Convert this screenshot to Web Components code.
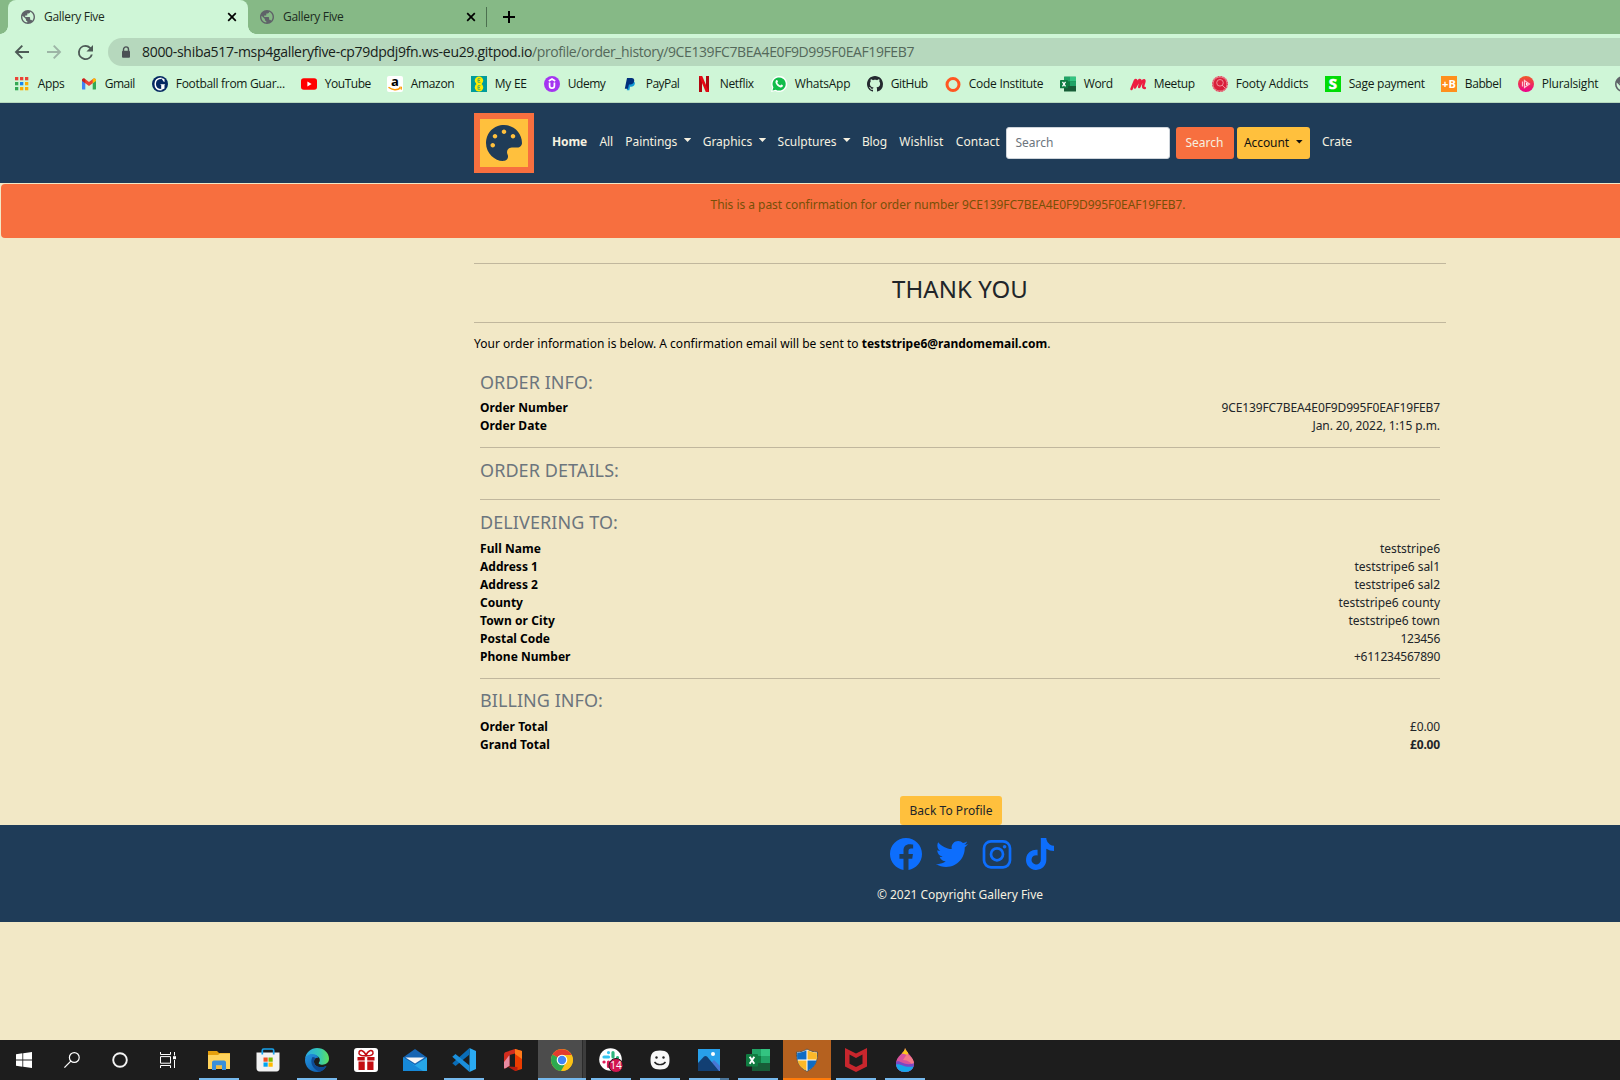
<!DOCTYPE html>
<html lang="en">
<head>
<meta charset="utf-8">
<title>Gallery Five</title>
<style>
html,body{margin:0;padding:0;height:1080px;overflow:hidden;background:#f2e8c6;font:12px/18px "Noto Sans",sans-serif;color:#212529}
</style>
</head>
<body>
<app-desktop></app-desktop>
<script>
const svg=(vb,body)=>`<svg viewBox="${vb}" xmlns="http://www.w3.org/2000/svg">${body}</svg>`;
const T=(x,y,s,f,t,extra='')=>`<text x="${x}" y="${y}" font-size="${s}" fill="${f}" text-anchor="middle" font-family="Open Sans,sans-serif" font-weight="700" ${extra}>${t}</text>`;
const ICONS={
globe:svg('2 2 20 20','<path fill="#5f6368" d="M12 2C6.48 2 2 6.48 2 12s4.48 10 10 10 10-4.48 10-10S17.52 2 12 2zm-1 17.93c-3.95-.49-7-3.85-7-7.93 0-.62.08-1.21.21-1.79L9 15v1c0 1.1.9 2 2 2v1.93zm6.9-2.54c-.26-.81-1-1.39-1.9-1.39h-1v-3c0-.55-.45-1-1-1H8v-2h2c.55 0 1-.45 1-1V7h2c1.1 0 2-.9 2-2v-.41c2.93 1.19 5 4.06 5 7.41 0 2.08-.8 3.97-2.1 5.39z"/>'),
close:svg('0 0 10 10','<path d="M1.2 1.2l7.6 7.6M8.8 1.2L1.2 8.8" stroke="#000" stroke-width="1.7"/>'),
plus:svg('0 0 12 12','<path d="M6 0v12M0 6h12" stroke="#000" stroke-width="2"/>'),
back:svg('0 0 16 16','<path d="M15 8H2.5M8.3 1.7L2 8l6.3 6.3" fill="none" stroke="#4d5a56" stroke-width="1.9"/>'),
fwd:svg('0 0 16 16','<path d="M1 8h12.5M7.7 1.7L14 8l-6.3 6.3" fill="none" stroke="#9db5a6" stroke-width="1.9"/>'),
reload:svg('4 4 16 16','<path fill="#4d5a56" d="M17.65 6.35A7.96 7.96 0 0 0 12 4a8 8 0 1 0 7.73 10h-2.08A6 6 0 1 1 12 6c1.66 0 3.14.69 4.22 1.78L13 11h7V4z"/>'),
lock:svg('0 0 10 13','<path d="M2.5 5V3.4a2.5 2.5 0 0 1 5 0V5" fill="none" stroke="#4b5054" stroke-width="1.4"/><rect x="1" y="4.8" width="8" height="7" rx="1" fill="#4b5054"/>'),
apps:svg('0 0 16 16',[['#ea4335','#ea4335','#ea4335'],['#34a853','#1a86f0','#fbab05'],['#34a853','#fbab05','#fbab05']].map((r,j)=>r.map((c,i)=>`<rect x="${1+i*5}" y="${1+j*5}" width="3.3" height="3.3" fill="${c}"/>`).join('')).join('')),
gmail:svg('0 0 16 16','<path fill="#4285f4" d="M1 4.5v8.2c0 .5.4.9.9.9h2.4V7z"/><path fill="#34a853" d="M15 4.5v8.2c0 .5-.4.9-.9.9h-2.4V7z"/><path fill="#ea4335" d="M1 4.1C1 2.6 2.7 2 3.800 2.800L8 6l4.200-3.200C13.300 2 15 2.600 15 4.100L11.700 7.200 8 10 4.300 7.200z"/><path fill="#c5221f" d="M1 4.100C1 2.600 2.700 2 3.800 2.800l.5.400v4L1 4.900z"/><path fill="#fbbc04" d="M15 4.100c0-1.500-1.700-2.100-2.800-1.300l-.5.400v4L15 4.900z"/>'),
guardian:svg('0 0 16 16','<circle cx="8" cy="8" r="8" fill="#052962"/><path d="M9.500 2.200C5.500 2.200 3.200 4.500 3.200 8s2.300 5.800 6.300 5.800" fill="none" stroke="#fff" stroke-width="1.500"/><path d="M9 2c1.600.1 2.700.7 3.500 1.300V6H12zM8 8.300h5.300l-.8.700v3.600c-1 .7-2 1.100-3.300 1.300V9z" fill="#fff"/>'),
youtube:svg('0 0 16 16','<rect y="2.200" width="16" height="11.600" rx="2.800" fill="#f00"/><path d="M6.400 5.600v4.800L10.600 8z" fill="#fff"/>'),
amazon:svg('0 0 16 16','<rect width="16" height="16" rx="2" fill="#fff"/>'+T(8,10,13,'#000','a')+'<path d="M1.500 11.300c3.500 3 9 3.200 12 .6" fill="none" stroke="#f90" stroke-width="1.500"/><path d="M12 11.300l2.600-.3-.4 2.800" fill="none" stroke="#f90"/>'),
ee:svg('0 0 16 16','<rect width="16" height="16" fill="#009c9c"/><circle cx="8" cy="4.600" r="4.200" fill="#ffec00"/><circle cx="8" cy="11.400" r="4.200" fill="#ffec00"/><path d="M9.500 2.700H7v3.600h2.500M7 4.500h2M9.500 9.700H7v3.600h2.500M7 11.500h2" stroke="#58b060" fill="none"/>'),
udemy:svg('0 0 16 16','<circle cx="8" cy="8" r="8" fill="#a435f0"/><path d="M5.600 6.500v3.300a2.400 2.400 0 0 0 4.800 0V6.500M4.800 5L8 3l3.200 2" fill="none" stroke="#fff" stroke-width="1.700"/>'),
paypal:svg('0 0 16 16','<path d="M6 5.500h5.500c2.500.5 1.500 5.300-2.300 5.300H8l-.6 3.400H4.800z" fill="#139ad6"/><path d="M5 2h4.800c2.800.2 3 3 1.600 4.900-1 1.300-2.500 1.600-4.500 1.600L6 12.800H2.800z" fill="#012f7c"/>'),
netflix:svg('0 0 16 16','<path d="M3 0h3v16H3zM10 0h3v16h-3z" fill="#b1060f"/><path d="M3 0h3.200L13 16h-3.200z" fill="#e50914"/>'),
whatsapp:svg('0 0 16 16','<path d="M0 16l1.200-4.300A8 8 0 1 1 4.300 14.900z" fill="#fff"/><path d="M1.500 14.500l.9-3.200A6.600 6.600 0 1 1 4.800 13.700z" fill="#12bd4b"/><path d="M5.200 4.300c1-.8 1.400.1 1.800 1.500l-.7 1c.7 1.300 1.600 2.100 2.900 2.700l1-1.100c1 .4 2 .7 1.700 1.600-.4 1.200-1.700 1.700-3 1.200C6.600 10.400 5.300 8.800 4.600 7c-.3-1 0-2 .6-2.700z" fill="#fff"/>'),
github:svg('0 0 16 16','<path fill="#24292f" d="M8 0C3.580 0 0 3.580 0 8c0 3.540 2.290 6.530 5.470 7.590.4.070.55-.17.55-.38 0-.19-.01-.82-.01-1.490-2.010.37-2.530-.49-2.690-.94-.09-.23-.48-.94-.82-1.130-.28-.15-.68-.52-.01-.53.63-.01 1.080.58 1.230.82.72 1.210 1.870.87 2.330.66.07-.52.28-.87.51-1.070-1.780-.2-3.640-.89-3.640-3.950 0-.87.31-1.590.82-2.150-.08-.2-.36-1.020.08-2.120 0 0 .67-.21 2.200.82.64-.18 1.320-.27 2-.27s1.360.09 2 .27c1.530-1.040 2.200-.82 2.200-.82.44 1.100.16 1.920.08 2.120.51.56.82 1.270.82 2.150 0 3.070-1.870 3.750-3.650 3.950.29.25.54.73.54 1.480 0 1.070-.01 1.930-.01 2.200 0 .21.15.46.55.38A8.010 8.010 0 0 0 16 8c0-4.420-3.580-8-8-8z"/>'),
ci:svg('0 0 16 16','<circle cx="8" cy="8.500" r="6" fill="none" stroke="#ff5722" stroke-width="3"/>'),
excel:svg('0 0 24 24','<rect x="6" y="1" width="18" height="22" rx="1" fill="#107c41"/><path d="M6 1h9v7H6z" fill="#21a366"/><path d="M15 1h9v7h-9z" fill="#33c481"/><path d="M15 8h9v7h-9z" fill="#21a366"/><path d="M6 15h18v8H6z" fill="#185c37"/><rect x="0" y="6" width="12" height="12.500" rx="1" fill="#107c41"/><path d="M3.700 8.700l4.600 7M8.300 8.700l-4.600 7" stroke="#fff" stroke-width="1.900"/>'),
meetup:svg('0 0 16 16','<path d="M1.500 13L5 4.500c1-1.200 2 .2 1.400 2L5 11.500 9 4.500c1-1.300 2-.3 1.300 1.500L9.200 11c1.500-3 2-5 4-6.500 1.500-.8 1.500.8.8 2.500-1 2.500-1.500 5 .8 5" fill="none" stroke="#ed1c40" stroke-width="2.500" stroke-linecap="round" stroke-linejoin="round"/>'),
footy:svg('0 0 16 16','<circle cx="8" cy="8" r="8" fill="#e8808c"/><circle cx="8" cy="8" r="6.600" fill="#d91f3a"/><circle cx="8" cy="6.800" r="3.300" fill="none" stroke="#ee909b"/><circle cx="8" cy="8" r="7.500" fill="none" stroke="#d9314a" stroke-dasharray="1 2"/><path d="M10 9l3 3" stroke="#ee909b"/>'),
sage:svg('0 0 16 16','<rect width="16" height="16" fill="#00dc06"/>'+T(8,13.300,15,'#fff','S','stroke="#fff" stroke-width=".6"')),
babbel:svg('0 0 16 16','<rect width="16" height="16" fill="#ff8f1c"/>'+T(8,12.200,11,'#fff','+B','textLength="14"')),
plural:svg('0 0 16 16','<defs><linearGradient id="g" x2="0" y2="1"><stop stop-color="#f05a28"/><stop offset="1" stop-color="#ec008c"/></linearGradient></defs><circle cx="8" cy="8" r="8" fill="url(#g)"/><path d="M6.500 4.500v7l5-3.500zM4.500 5.500v5" fill="none" stroke="#ffc3d3" stroke-width="1.200"/><path d="M8 6.500v3L10.200 8z" fill="#fff"/>'),
palette:svg('0 0 512 512','<path fill="#1f3c58" d="M204.300 5C104.900 24.400 24.800 104.300 5.200 203.400c-37 187 131.700 326.400 258.800 306.700 41.200-6.400 61.400-54.600 42.500-91.700-23.100-45.400 9.900-98.400 60.900-98.400h79.700c35.800 0 64.800-29.600 64.900-65.300C511.500 97.100 368.100-26.900 204.300 5zM96 320c-17.700 0-32-14.300-32-32s14.300-32 32-32 32 14.300 32 32-14.300 32-32 32zm32-128c-17.700 0-32-14.300-32-32s14.300-32 32-32 32 14.300 32 32-14.300 32-32 32zm128-64c-17.700 0-32-14.300-32-32s14.300-32 32-32 32 14.300 32 32-14.300 32-32 32zm128 64c-17.700 0-32-14.300-32-32s14.300-32 32-32 32 14.300 32 32-14.300 32-32 32z"/>'),
facebook:svg('0 0 16 16','<path fill="#0d6efd" d="M16 8.049c0-4.446-3.582-8.050-8-8.050C3.580 0-.002 3.603-.002 8.050c0 4.017 2.926 7.347 6.750 7.951v-5.625h-2.030V8.050H6.750V6.275c0-2.017 1.195-3.131 3.022-3.131.876 0 1.791.157 1.791.157v1.980h-1.009c-.993 0-1.303.621-1.303 1.258v1.510h2.218l-.354 2.326H9.250V16c3.824-.604 6.750-3.934 6.750-7.951z"/>'),
twitter:svg('0 0 512 512','<path fill="#0d6efd" d="M459.370 151.716c.325 4.548.325 9.097.325 13.645 0 138.720-105.583 298.558-298.558 298.558-59.452 0-114.680-17.219-161.137-47.106 8.447.974 16.568 1.299 25.340 1.299 49.055 0 94.213-16.568 130.274-44.832-46.132-.975-84.792-31.188-98.112-72.772 6.498.974 12.995 1.624 19.818 1.624 9.421 0 18.843-1.300 27.614-3.573-48.081-9.747-84.143-51.980-84.143-102.985v-1.299c13.969 7.797 30.214 12.670 47.431 13.319-28.264-18.843-46.781-51.005-46.781-87.391 0-19.492 5.197-37.360 14.294-52.954 51.655 63.675 129.300 105.258 216.365 109.807-1.624-7.797-2.599-15.918-2.599-24.040 0-57.828 46.782-104.934 104.934-104.934 30.213 0 57.502 12.670 76.670 33.137 23.715-4.548 46.456-13.320 66.599-25.340-7.798 24.366-24.366 44.833-46.132 57.827 21.117-2.273 41.584-8.122 60.426-16.243-14.292 20.791-32.161 39.308-52.628 54.253z"/>'),
instagram:svg('0 0 32 32','<g fill="none" stroke="#0d6efd" stroke-width="2.700"><rect x="3" y="3.300" width="26" height="26" rx="7"/><circle cx="16" cy="16.300" r="6"/></g><circle cx="23.600" cy="8.800" r="1.800" fill="#0d6efd"/>'),
tiktok:svg('0 0 448 512','<path fill="#0d6efd" d="M448,209.910a210.060,210.060,0,0,1-122.770-39.250V349.380A162.550,162.550,0,1,1,185,188.310V278.200a74.620,74.620,0,1,0,52.230,71.180V0l88,0a121.180,121.180,0,0,0,1.860,22.170h0A122.180,122.180,0,0,0,381,102.390a121.430,121.430,0,0,0,67,20.140Z"/>'),
windows:svg('0 0 16 16','<path fill="#fff" d="M0 2.200l6.400-.9v6.300H0zM7.200 1.200L16 0v7.600H7.200zM0 8.400h6.400v6.300L0 13.800zM7.200 8.400H16V16l-8.800-1.200z"/>'),
search:svg('0 0 16 16','<circle cx="10.300" cy="5.500" r="4.900" fill="none" stroke="#fff" stroke-width="1.200"/><path d="M6.800 9.100L.4 15.600" stroke="#fff" stroke-width="1.300"/>'),
cortana:svg('0 0 16 16','<circle cx="8" cy="8" r="6.800" fill="none" stroke="#f4f4f4" stroke-width="1.900"/>'),
taskview:svg('0 0 16 16','<path d="M.5 0v2.500h10V0M.5 16v-2.500h10V16M.5 4.600h10v6.600H.5zM14.500 0v3.500M14.500 8v8" fill="none" stroke="#fff"/><rect x="13" y="4.200" width="3" height="3" fill="#fff"/>'),
explorer:svg('0 0 24 24','<path d="M1 3h9l2 2h11v15H1z" fill="#e59f0c"/><path d="M1 7h10l2-1.500h10V21H1z" fill="#ffd35c"/><path d="M5 22v-7.500c0-1 .6-2 2-2h10c1.400 0 2 1 2 2V22h-4v-4.500H9V22z" fill="#3a8fd9"/><path d="M9 17.500h6V21H9z" fill="#f3bb3b"/>'),
store:svg('0 0 24 24','<path d="M.5 4.500h23V20c0 2-1 3.500-3 3.500h-17c-2 0-3-1.500-3-3.500z" fill="#f2f2f2"/><path d="M6.300 6.500v-4c0-1 .5-1.500 1.500-1.500h8.400c1 0 1.500.5 1.500 1.500v4" fill="none" stroke="#18a3ec" stroke-width="1.700"/><path d="M7.500 9.500h4.200v4.200H7.500z" fill="#f25022"/><path d="M12.500 9.500h4.200v4.200h-4.200z" fill="#7fba00"/><path d="M7.500 14.500h4.200v4.200H7.500z" fill="#00a4ef"/><path d="M12.500 14.500h4.200v4.200h-4.200z" fill="#ffb900"/>'),
edge:svg('0 0 24 24','<defs><linearGradient id="e" x2="1"><stop stop-color="#2aa8e6"/><stop offset=".6" stop-color="#35c8b4"/><stop offset="1" stop-color="#5fe05c"/></linearGradient><linearGradient id="f" y2="1"><stop stop-color="#2394df"/><stop offset="1" stop-color="#0b55a8"/></linearGradient></defs><path d="M0 11C1 4 6 0 12 0c7 0 12 5 12 10.500 0 4-3 6.200-6.500 6.200-3 0-4.500-1.200-3.500-2.200 2-2.500.5-6-3-7C6 6 1 8 0 11z" fill="url(#e)"/><path d="M0 12C0 8 4 5.500 8 6c3 .3 5 2 5.500 4-2.500-.8-4.500 1-4.500 3.500C9 18 14 21 21.500 18 19 22 16 24 12 24 5 24 0 18.500 0 12z" fill="url(#f)"/><path d="M7.500 9c-3 5 0 12 7 14.700 3-.7 5.500-2.700 7-5.700C14 21 9 18 9 13.500c0-1.500.5-2.500 1.500-3.200C9.500 9 8 9 7.500 9z" fill="#0e4a94"/>'),
gift:svg('0 0 24 24','<rect width="24" height="24" rx="3" fill="#fff"/><path d="M3.500 9h17v3.500h-17zM4.500 13.500h15V22h-15z" fill="#c30d12"/><path d="M12 9v13" stroke="#fff" stroke-width="2.500"/><path d="M12 7.800C6 8.300 4.500 6 5 4.300c.8-3 5-2.300 7 3 2-5.300 6.200-6 7-3 .5 1.700-1 4-7 3.500z" fill="none" stroke="#c30d12" stroke-width="1.500"/>'),
mail:svg('0 0 24 24','<path d="M0 9.500L12 1l12 8.500V23H0z" fill="#1665b3"/><path d="M0 9.500L12 17l12-7.500V23H0z" fill="#27a7e8"/><path d="M0 9.500L20 23H0z" fill="#1688d8"/><path d="M2.500 9.500h19L12 15.500z" fill="#f6f6f6"/>'),
vscode:svg('0 0 24 24','<path d="M17.500 0L24 3v18l-6.500 3z" fill="#2aaaf2"/><path d="M17.500 6.500L3.500 18 .3 15.300 17.500 0z" fill="#0a6db8"/><path d="M17.500 17.500L3.500 6 .3 8.700 17.500 24z" fill="#1b8fdb"/>'),
office:svg('0 0 24 24','<path d="M14 1l7 2v18l-7 2z" fill="#eb3c00"/><path d="M14 1l7 2v8l-7-5z" fill="#ff7a1a"/><path d="M14 1v4.500L8.500 7v11L4 20.500c-.7.300-1-.2-1-1V6.500C3 5 4 4.300 5 4z" fill="#d22c1d"/><path d="M8.500 7v11L4 20.500c-.7.300-1-.2-1-1V14z" fill="#e78aa1"/><path d="M6.500 18.500L14 23l2.500-.7V19z" fill="#b91d10"/>'),
chrome:svg('0 0 24 24','<circle cx="12" cy="12" r="11" fill="#fbc116"/><path d="M12 12L2.500 6.500A11 11 0 0 1 21.600 7z" fill="#e33b2e"/><path d="M12 12L2.500 6.500A11 11 0 0 0 11 23l5-8.500z" fill="#2da94f"/><path d="M12 7h9.600a11 11 0 0 1-10 16L17 13z" fill="#fbc116"/><circle cx="12" cy="12" r="5.300" fill="#fff"/><circle cx="12" cy="12" r="4.200" fill="#4285f4"/>'),
slack:svg('0 0 24 24','<circle cx="11.500" cy="11.500" r="11.300" fill="#fff"/><g stroke-width="3.200" stroke-linecap="round"><path d="M9.500 4.500v.1M5 9h4.500" stroke="#36c5f0"/><path d="M14 4.500V9M18.500 9.500h.1" stroke="#2eb67d"/><path d="M5 14h.1M9.500 14v4.500" stroke="#e01e5a"/><path d="M14 14h4" stroke="#ecb22e"/></g><circle cx="17" cy="17.500" r="7" fill="#d11550" stroke="#1d1d1d"/>'+T(17,21.200,10,'#fff','14','style="font-weight:500"')),
smile:svg('0 0 24 24','<path d="M12 2.500c7 0 9.500 3 9.500 9.500S19 21.500 12 21.500 2.500 18.500 2.500 12 5 2.500 12 2.500z" fill="#f7f7f7"/><path d="M6.500 14c2.500 3.500 8.500 3.500 11 0" fill="none" stroke="#222" stroke-width="1.400"/><circle cx="8.500" cy="9.500" r="1.200" fill="#222"/><circle cx="15.500" cy="9.500" r="1.200" fill="#222"/>'),
photos:svg('0 0 24 24','<path d="M1 1h22v22H1z" fill="#28a0ea"/><path d="M12 17l5-5 6 6v5H12z" fill="#4877d4"/><path d="M1 15l6-6.500c1-.8 2-.8 3 0L22 23H1z" fill="#123f73"/><circle cx="16" cy="6" r="2" fill="#fff"/>'),
shield:svg('0 0 24 24','<path d="M12 1c3 2 6.500 3 10.500 3 .5 8-2 15-10.500 19.500C3.500 19 1 12 1.500 4 5.500 4 9 3 12 1z" fill="#fff" stroke="#5f564b"/><path d="M11.500 2.300v9.200H2.200C2 9 2 7 2.200 4.800 5.500 4.700 9 3.800 11.500 2.300zM12.500 12.500h9c-1 4.500-4 8-9 10.300z" fill="#0f6cc4"/><path d="M12.500 2.300c3 1.500 6 2.400 9.300 2.500.2 2.200.2 4.200 0 6.700h-9.300zM11.500 12.500h-9c1 4.500 4 8 9 10.300z" fill="#fbb829"/>'),
mcafee:svg('0 0 24 24','<path d="M1 0l11 5.500L23 0v18.500L12 24 1 18.500zM5.500 6.500v9.200L12 19l6.500-3.300V6.500L12 10z" fill="#c8262d" fill-rule="evenodd"/>'),
paint:svg('0 0 24 24','<defs><clipPath id="c"><path d="M12 0c0 5-9 8-9 15.500C3 20.500 7 24 12 24s9-3.500 9-8.500C21 10 14 5 12 0z"/></clipPath></defs><g clip-path="url(#c)"><path d="M0 0h24v24H0z" fill="#d8549c"/><path d="M9 0h7l-1 7c-2 0-4-2-6-1z" fill="#fcc61b"/><path d="M14 6l8 6v6c-4-2-6-6-12-6z" fill="#f47a88"/><path d="M2 14c6-3 8 5 20 1v9H2z" fill="#7a48c4"/><path d="M2 17c6-3 8 4 20 1v7H2z" fill="#17a7ea"/></g>')
};

const define=(name,css,html,extra)=>customElements.define(name,class extends HTMLElement{
  connectedCallback(){
    if(this.shadowRoot)return;
    const t=document.createElement('template');
    t.innerHTML=`<style>*{box-sizing:border-box}${css}</style>${typeof html==='function'?html(this):html}`;
    this.attachShadow({mode:'open'}).append(t.content.cloneNode(true));
    if(extra)extra(this);
  }
});

/* Text that settles to a given advance width by tracking. */
const fits=new Set();
define('fit-text',':host{display:inline-block;white-space:nowrap}span{display:inline-block;white-space:pre}','<span><slot></slot></span>',el=>fits.add(el));
const fitAll=()=>fits.forEach(el=>{
  const s=el.shadowRoot.querySelector('span'),w=+el.getAttribute('w'),n=el.textContent.length;
  s.style.letterSpacing='0px';
  const d=(w-s.getBoundingClientRect().width)/n;
  s.style.letterSpacing=d.toFixed(4)+'px';
  el.style.width=w+'px';
});

define('g-icon',':host{display:inline-flex;flex:none}svg{width:100%;height:100%;display:block;overflow:visible}',el=>ICONS[el.getAttribute('name')],el=>{
  const s=el.getAttribute('size');el.style.width=s+'px';el.style.height=(el.getAttribute('h')||s)+'px';
});

define('browser-tab',`:host{display:flex;align-items:center;height:34px;padding:0 11px 0 13px;width:240px;flex:none;color:#1c2b20;position:relative}
:host([active]){background:#cff6d7;border-radius:8px 8px 0 0}
:host([active])::before,:host([active])::after{content:"";position:absolute;bottom:0;width:8px;height:8px}
:host([active])::before{left:-8px;background:radial-gradient(circle at 0 0,transparent 7.500px,#cff6d7 8px)}
:host([active])::after{right:-8px;background:radial-gradient(circle at 100% 0,transparent 7.500px,#cff6d7 8px)}
fit-text{margin-left:9px;flex:none}.sp{flex:1}`,'<g-icon name="globe" size="14"></g-icon><fit-text w="60.500"><slot></slot></fit-text><span class="sp"></span><g-icon name="close" size="10"></g-icon>',
el=>{el.shadowRoot.querySelector('fit-text').textContent='Gallery Five'});

const marks=[['apps','Apps',14,26.5],['gmail','Gmail',81,30],['guardian','Football from Guar...',152,109],['youtube','YouTube',301,46],['amazon','Amazon',387,43.5],['ee','My EE',471,32],['udemy','Udemy',544,37.5],['paypal','PayPal',622,33.5],['netflix','Netflix',696,34],['whatsapp','WhatsApp',771,55.5],['github','GitHub',867,37],['ci','Code Institute',945,74.5],['excel','Word',1060,29],['meetup','Meetup',1130,41],['footy','Footy Addicts',1212,72.5],['sage','Sage payment',1325,76],['babbel','Babbel',1441,36.5],['plural','Pluralsight',1518,56.5],['globe','',1615,0]];
define('bookmark-item',':host{display:flex;align-items:center;gap:7.800px;flex:none}',el=>{
  const t=el.getAttribute('label');return `<g-icon name="${el.getAttribute('icon')}" size="16"></g-icon>${t?`<fit-text w="${el.getAttribute('w')}">${t}</fit-text>`:''}`});

define('browser-chrome',`:host{display:flex;flex-direction:column;height:103px;background:#cff6d7;border-bottom:1px solid #b6d8bd;font-family:"Open Sans","Noto Sans",sans-serif;font-stretch:90%;color:#101c14}
.tabs{display:flex;height:34px;background:#86b986;padding-left:8px;align-items:center}
browser-tab+browser-tab{margin-left:-1px}
.div{width:1px;height:20px;background:#4c704f;margin-left:-1px;margin-right:16px}
.bar{display:flex;align-items:center;height:36px;padding-left:14px;flex:none}
.bar g-icon{margin-right:16px}
.omni{flex:1;height:28px;background:#b6d8bd;border-radius:14px 0 0 14px;display:flex;align-items:center;padding-left:13px;font-size:14px;line-height:20px;color:#17211a;margin-left:-1px}
.bar .omni g-icon{margin-right:11px}.path{color:#54685a}
.marks{display:flex;height:28px;align-items:center;padding-left:14px;overflow:hidden}`,
`<div class="tabs"><browser-tab active></browser-tab><browser-tab></browser-tab><span class="div"></span><g-icon name="plus" size="12"></g-icon></div>
<div class="bar"><g-icon name="back" size="16"></g-icon><g-icon name="fwd" size="16"></g-icon><g-icon name="reload" size="15"></g-icon>
<div class="omni"><g-icon name="lock" size="10" h="13"></g-icon><fit-text w="390">8000-shiba517-msp4galleryfive-cp79dpdj9fn.ws-eu29.gitpod.io</fit-text><fit-text class="path" w="382">/profile/order_history/9CE139FC7BEA4E0F9D995F0EAF19FEB7</fit-text></div></div>
<div class="marks">${marks.map((m,i)=>`<bookmark-item icon="${m[0]}" label="${m[1]}" w="${m[3]}" style="width:${(marks[i+1]?marks[i+1][2]:1640)-m[2]}px"></bookmark-item>`).join('')}</div>`);

define('nav-link',':host{display:flex;align-items:center;color:#f6f1e0;flex:none}:host([bold]){font-weight:700}i{display:none;margin-left:6.500px;width:7.500px;height:4px;background:currentColor;clip-path:polygon(0 0,100% 0,50% 100%);margin-bottom:3px;margin-right:-1px}:host([drop]) i{display:block}',el=>`<fit-text w="${el.getAttribute('w')}">${el.textContent}</fit-text><i></i>`);

define('site-nav',`:host{display:flex;height:80px;background:#1f3c58;padding-left:474px;align-items:center}
.logo{width:60px;height:60px;border:6px solid #f76f3f;background:#ffc03d;display:flex;align-items:center;justify-content:center;margin-right:18px}
.links{display:flex;gap:12.400px;margin-top:-3px;width:454px}
.in{width:164px;height:32px;background:#fff;border:1px solid #ced4da;border-radius:3px;color:#6c757d;display:flex;align-items:center;padding:0 8.500px;margin-right:6px}
.btn{height:32px;border-radius:3px;display:flex;align-items:center}
.s{width:58px;background:#f76f3f;color:#f6f1e0;padding-left:9.500px;margin-right:3px}
.a{width:73px;background:#ffc03d;padding-left:7px;margin-right:12px}.a nav-link{color:#111}`,
`<div class="logo"><g-icon name="palette" size="36"></g-icon></div>
<div class="links"><nav-link bold w="35">Home</nav-link><nav-link w="13.500">All</nav-link><nav-link drop w="52">Paintings</nav-link><nav-link drop w="49.500">Graphics</nav-link><nav-link drop w="59">Sculptures</nav-link><nav-link w="25">Blog</nav-link><nav-link w="44">Wishlist</nav-link><nav-link w="44">Contact</nav-link></div>
<div class="in"><fit-text w="38">Search</fit-text></div><div class="btn s"><fit-text w="38">Search</fit-text></div><div class="btn a"><nav-link drop w="45">Account</nav-link></div><nav-link w="30" style="margin-top:-3px">Crate</nav-link>`);

define('site-alert',':host{display:flex;align-items:flex-start;margin:1px 0 0 1px;height:54px;background:#f76f3f;border-radius:4px 0 0 4px;padding:12px 0 0 709.500px;color:#774f08}','<fit-text w="251.500">This is a past confirmation for order number </fit-text><fit-text w="223.500">9CE139FC7BEA4E0F9D995F0EAF19FEB7.</fit-text>');

define('order-row',':host{display:flex;justify-content:space-between;height:18px;line-height:18px}b{color:#000}:host([strong]) .v{font-weight:700}',el=>{const g=k=>el.getAttribute(k);return `<b><fit-text w="${g('lw')}">${g('label')}</fit-text></b><span class="v"><fit-text w="${g('vw')}">${g('value')}</fit-text></span>`});

define('order-section',':host{display:block;padding:11.700px 0 12px;border-bottom:1px solid #c1b79d}:host([last]){border:0}h3{font-size:18px;line-height:21.600px;font-weight:400;color:#6c757d;margin:0 0 5.900px;height:21.600px}',el=>`<h3><fit-text w="${el.getAttribute('w')}">${el.getAttribute('heading')}</fit-text></h3><slot></slot>`);

define('order-page',`:host{display:block;width:972px;margin-left:474px;height:587px;padding-top:25px}
.t{height:60px;border:solid #c1b79d;border-width:1px 0;padding-top:10px;text-align:center;font-size:24px;line-height:29px}
p{margin:12px 0 7px;color:#000;display:flex;height:18px}.secs{padding:0 6px;display:block}`,
`<div class="t"><fit-text w="136">THANK YOU</fit-text></div>
<p><fit-text w="387.700">Your order information is below. A confirmation email will be sent to </fit-text><b><fit-text w="185.500">teststripe6@randomemail.com</fit-text></b><span>.</span></p>
<div class="secs">
<order-section heading="ORDER INFO:" w="113"><order-row label="Order Number" lw="88" value="9CE139FC7BEA4E0F9D995F0EAF19FEB7" vw="218.500"></order-row><order-row label="Order Date" lw="67" value="Jan. 20, 2022, 1:15 p.m." vw="127.500"></order-row></order-section>
<order-section heading="ORDER DETAILS:" w="139"></order-section>
<order-section heading="DELIVERING TO:" w="138"><order-row label="Full Name" lw="61" value="teststripe6" vw="60"></order-row><order-row label="Address 1" lw="58" value="teststripe6 sal1" vw="85.500"></order-row><order-row label="Address 2" lw="58" value="teststripe6 sal2" vw="85.500"></order-row><order-row label="County" lw="43" value="teststripe6 county" vw="101.500"></order-row><order-row label="Town or City" lw="75" value="teststripe6 town" vw="91.500"></order-row><order-row label="Postal Code" lw="70" value="123456" vw="39.500"></order-row><order-row label="Phone Number" lw="90.500" value="+611234567890" vw="86"></order-row></order-section>
<order-section last heading="BILLING INFO:" w="123"><order-row label="Order Total" lw="68" value="£0.00" vw="30"></order-row><order-row strong label="Grand Total" lw="70" value="£0.00" vw="30"></order-row></order-section>
</div>`);

define('profile-button',':host{display:flex;margin:-29px 0 0 900px;height:29px;width:102px;border-radius:3px;background:#ffc03d;align-items:center;justify-content:center}','<fit-text w="83">Back To Profile</fit-text>');

define('site-footer',':host{display:flex;flex-direction:column;height:97px;background:#1f3c58;color:#f6f1e0}.i{display:flex;align-items:center;margin:13px 0 0 890px;gap:14px}.c{margin:16px 0 0 877px}',
`<div class="i"><g-icon name="facebook" size="32"></g-icon><g-icon name="twitter" size="32"></g-icon><g-icon name="instagram" size="32" style="margin-left:-1px;margin-top:-1px"></g-icon><g-icon name="tiktok" size="28" h="32" style="margin-left:-1px"></g-icon></div><div class="c"><fit-text w="166">© 2021 Copyright Gallery Five</fit-text></div>`);

define('task-item',`:host{display:flex;width:48px;height:40px;align-items:center;justify-content:center;flex:none;margin-right:1px;position:relative}
:host([sys]){margin-right:0}
:host([open])::after{content:"";position:absolute;left:4px;right:4px;bottom:0;height:2px;background:#76b9ed}
:host([cur]){background:linear-gradient(90deg,#4c4c4c 44px,#2b2b2b 44px,#2b2b2b 45px,#3d3d3d 45px)}:host([cur])::after{left:0;right:0}
:host([stack])::after{background:linear-gradient(90deg,#76b9ed 31px,#4c769a 31px)}
:host([warn]){background:#b5611f}:host([warn])::after{left:0;right:0;background:#ff7b0a}`,el=>`<g-icon name="${el.getAttribute('icon')}" size="${el.getAttribute('size')||24}"></g-icon>`);

define('task-bar',':host{display:flex;height:40px;background:#1d1d1d}.sys{display:flex;margin-right:3px}',
`<div class="sys"><task-item sys icon="windows" size="16"></task-item><task-item sys icon="search" size="16"></task-item><task-item sys icon="cortana" size="16"></task-item><task-item sys icon="taskview" size="16"></task-item></div>
<task-item open icon="explorer"></task-item><task-item icon="store"></task-item><task-item open icon="edge"></task-item><task-item icon="gift"></task-item><task-item icon="mail"></task-item><task-item open icon="vscode"></task-item><task-item icon="office"></task-item><task-item open cur icon="chrome"></task-item><task-item open icon="slack"></task-item><task-item open icon="smile"></task-item><task-item open stack icon="photos"></task-item><task-item open icon="excel"></task-item><task-item open warn icon="shield"></task-item><task-item open icon="mcafee"></task-item><task-item open icon="paint"></task-item>`);

define('app-desktop',':host{display:flex;flex-direction:column;width:1620px;height:1080px;overflow:hidden}browser-chrome,site-nav,site-alert,order-page,profile-button,site-footer,task-bar{flex:none}.sp{flex:1}',
'<browser-chrome></browser-chrome><site-nav></site-nav><site-alert></site-alert><order-page></order-page><profile-button></profile-button><site-footer></site-footer><div class="sp"></div><task-bar></task-bar>');
fitAll();
addEventListener('load',fitAll);
</script>
</body>
</html>
